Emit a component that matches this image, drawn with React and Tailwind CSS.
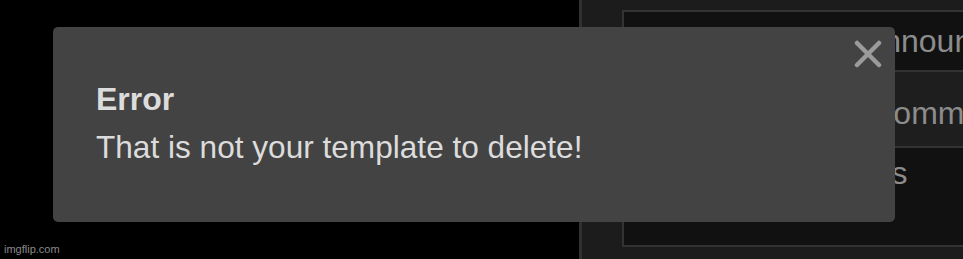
import React from 'react';

const App = () => {
  return (
    <div className="relative w-[963px] h-[259px] overflow-hidden bg-black font-['Liberation_Sans',Arial,sans-serif]">
      <div className="flex h-full">
        {/* left blank area */}
        <div className="w-[579px] shrink-0 bg-black" />

        {/* settings panel behind the toast */}
        <div className="flex-1 h-full border-l-[3px] border-[#303030] bg-[#1c1c1c] pl-[40px] pt-[10px]">
          <div className="w-[420px] h-[237px] flex flex-col border-2 border-[#333] bg-[#111] text-[32px] text-[#8c8c8c] leading-none whitespace-nowrap">
            <div className="h-[58px] shrink-0 pl-[140px] pt-[13px]">Add to announcements</div>
            <div className="h-[78px] shrink-0 border-y-2 border-[#333] bg-[#1e1e1e] pl-[168px] pt-[25px]">Allow comments</div>
            <div className="flex-1 pl-[216px] pt-[9px]">Tags</div>
          </div>
        </div>
      </div>

      {/* error toast */}
      <div className="absolute left-[53px] top-[27px] w-[842px] h-[195px] rounded-[5px] bg-[#434343] pl-[43px] pt-[48px] text-[#dcdcdc] text-[32px] leading-[48px]">
        <div className="font-bold">Error</div>
        <div className="text-[31.6px]">That is not your template to delete!</div>
        <button className="absolute right-[13px] top-[13px] w-[28px] h-[28px] text-[#9b9b9b]">
          <svg viewBox="0 0 28 28" width="28" height="28" fill="none" stroke="currentColor" strokeWidth="4.5" strokeLinecap="round">
            <path d="M3 3 L25 25 M25 3 L3 25" />
          </svg>
        </button>
      </div>

      <div className="absolute left-[4px] top-[243px] text-[11px] leading-[13px] text-[#8a8a8a]">imgflip.com</div>
    </div>
  );
};

export default App;
